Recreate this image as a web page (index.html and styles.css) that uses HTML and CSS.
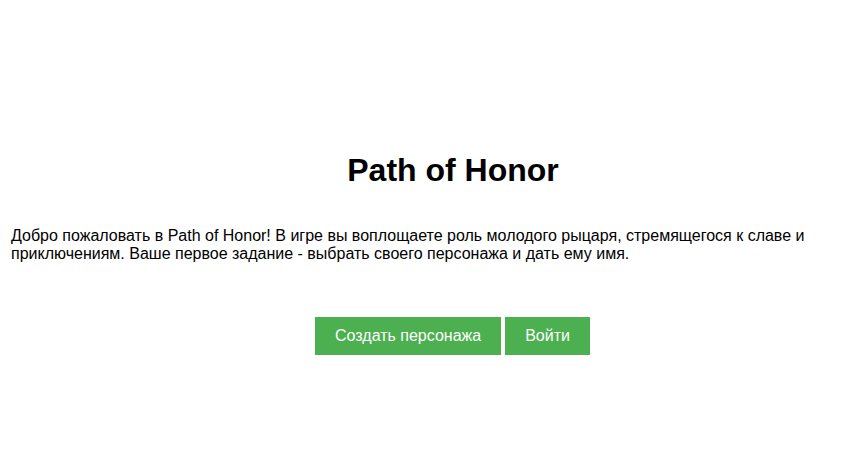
FILE: index.html
```html
<!DOCTYPE html>
<html lang="ru">
<head>
<meta charset="utf-8">
<title>Path of Honor</title>
<link rel="stylesheet" href="styles.css">
</head>
<body>
<main class="page">
  <h1 class="title">Path of Honor</h1>
  <p class="intro">Добро пожаловать в Path of Honor! В игре вы воплощаете роль молодого рыцаря, стремящегося к славе и приключениям. Ваше первое задание - выбрать своего персонажа и дать ему имя.</p>
  <div class="actions">
    <button class="btn">Создать персонажа</button>
    <button class="btn">Войти</button>
  </div>
</main>
</body>
</html>
```
FILE: styles.css
```css
html, body {
  margin: 0;
  padding: 0;
  background: #ffffff;
}
body {
  font-family: "Liberation Sans", Arial, sans-serif;
  color: #000000;
}
.page {
  padding: 152px 10px 0 11px;
}
.title {
  margin: 0 0 38px 0;
  padding-left: 52px;
  font-size: 32px;
  font-weight: bold;
  text-align: center;
}
.intro {
  margin: 0;
  font-size: 16px;
}
.actions {
  margin-top: 54px;
  padding-left: 51px;
  display: flex;
  justify-content: center;
  gap: 4px;
}
.btn {
  font-family: "Liberation Sans", Arial, sans-serif;
  font-size: 16px;
  line-height: 18px;
  color: #ffffff;
  background: #4caf50;
  border: none;
  padding: 10px 20px;
  margin: 0;
  cursor: pointer;
}
```
